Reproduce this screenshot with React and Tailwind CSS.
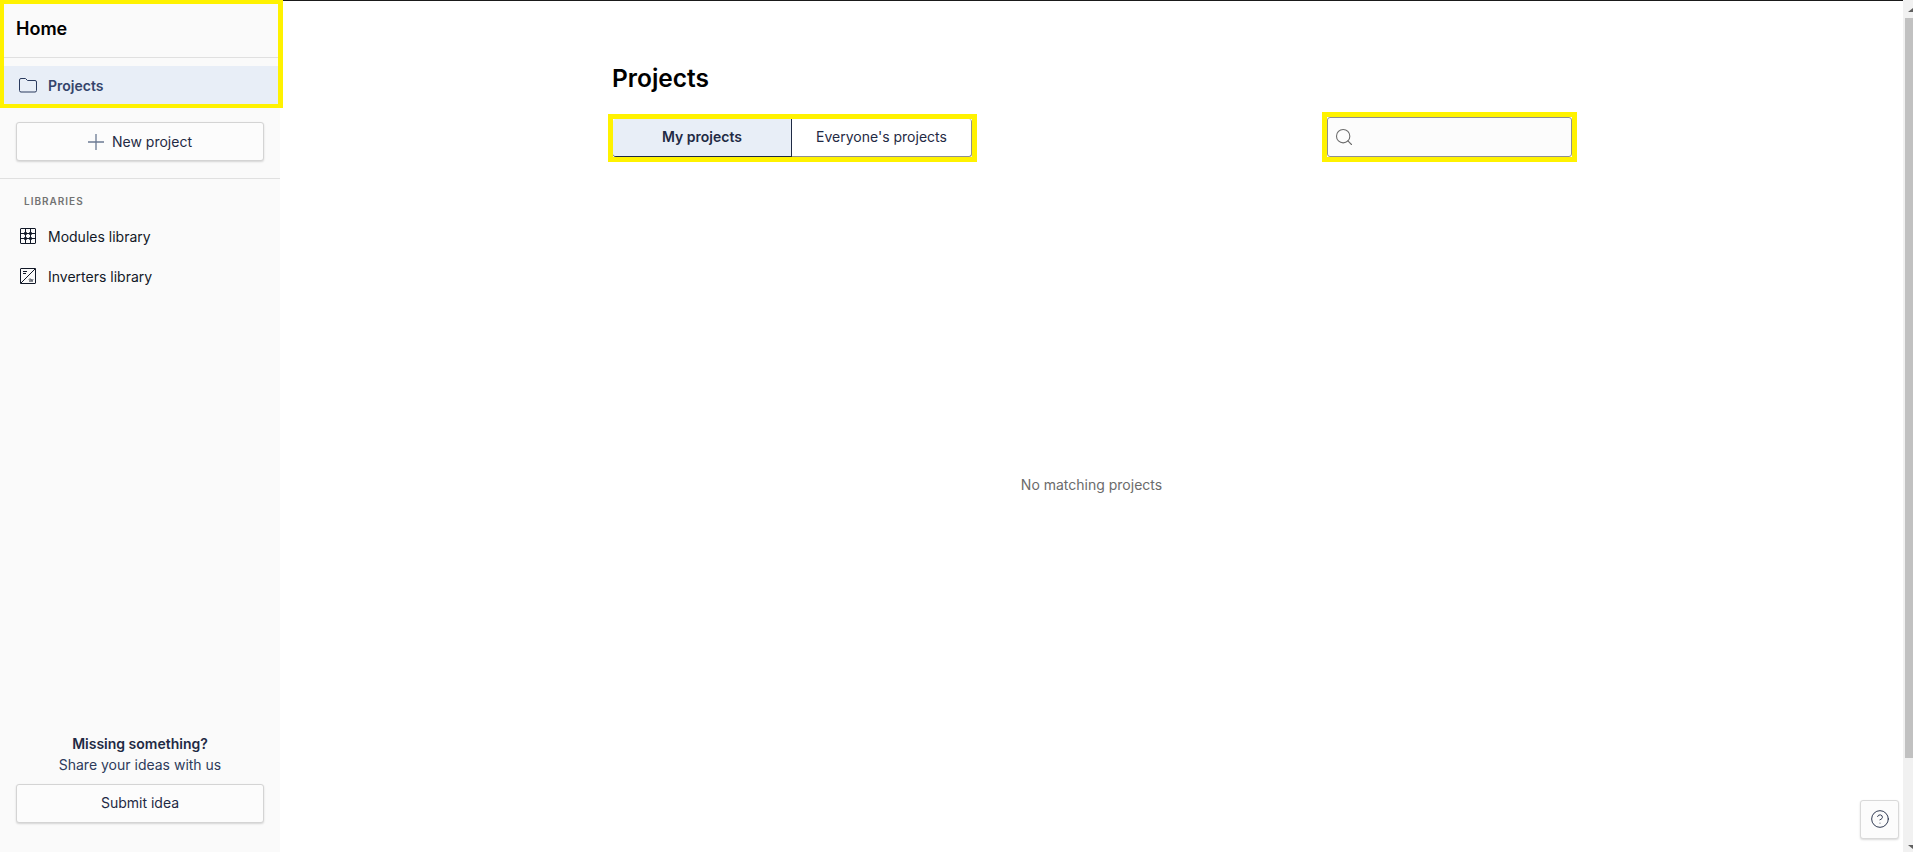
import React from 'react';
import { Search, CircleHelp } from 'lucide-react';

const FolderIcon = () => (
  <svg width="18" height="15" viewBox="0 0 18 15" fill="none" stroke="#2a3a5e" strokeWidth="1">
    <path d="M.5 12.5V2A1.5 1.5 0 0 1 2 .5h4.5l2 2H16A1.5 1.5 0 0 1 17.500 4v8.500A1.500 1.500 0 0 1 16 14H2a1.500 1.500 0 0 1-1.500-1.500z" />
  </svg>
);

const PlusIcon = () => (
  <svg width="16" height="16" viewBox="0 0 16 16" fill="none" stroke="#6b7a93" strokeWidth="1.3">
    <path d="M0 8h16M8 0v16" />
  </svg>
);

const ModulesIcon = () => (
  <svg width="16" height="16" viewBox="0 0 16 16" fill="none" stroke="#111827" strokeWidth="1">
    <rect x="0.5" y="0.5" width="15" height="15" rx="0.5" />
    <path d="M.5 5.500h15M.5 10.500h15M5.500 .5v15M10.500 .5v15" />
    <circle cx="5.500" cy="5.500" r="1.300" />
    <circle cx="10.500" cy="5.500" r="1.300" />
    <circle cx="5.500" cy="10.500" r="1.300" />
    <circle cx="10.500" cy="10.500" r="1.300" />
  </svg>
);

const InvertersIcon = () => (
  <svg width="16" height="16" viewBox="0 0 16 16" fill="none" stroke="#111827" strokeWidth="1">
    <rect x="0.5" y="0.5" width="15" height="15" rx="0.5" />
    <path d="M.5 15.500l15-15M3 3.500h4M3 5.500h3M9 11.500c.7-.9 1.400-.9 2 0s1.400.9 2 0M9 13h4" />
  </svg>
);

const App = () => {
  return (
    <div className="h-[852px] flex overflow-hidden bg-white font-['Inter',sans-serif] text-[#1f2a44]">

      {/* Sidebar */}
      <aside className="w-[280px] shrink-0 flex flex-col bg-[#fafafa]">
        <div className="border-4 border-r-[5px] border-[#fff200] w-[283px] h-[108px] relative z-10">
          <div className="h-[54px] flex items-center px-3 pb-[5px] border-b border-[#e0e0e0]">
            <h2 className="text-[18px] font-semibold text-black">Home</h2>
          </div>
          <div className="mt-2 h-[38px] flex items-center gap-[11px] pl-[15px] bg-[#e8eef7]">
            <FolderIcon />
            <span className="text-[14px] font-semibold text-[#34446b]">Projects</span>
          </div>
        </div>

        <div className="px-4 pt-[14px] pb-[17px] border-b border-[#e0e0e0]">
          <button className="w-full h-[39px] flex items-center justify-center gap-2 bg-[#fcfcfc] border border-[#d4d4d4] rounded-[3px] shadow-[0_1px_2px_rgba(0,0,0,0.15)] text-[14px] text-[#1f2a44]">
            <PlusIcon />
            New project
          </button>
        </div>

        <div className="px-6 pt-[15px] pb-[7px] text-[10px] font-semibold tracking-[0.1em] text-[#737373]">LIBRARIES</div>
        <div className="flex items-center gap-3 pl-5 h-10 text-[14px] text-[#111827]">
          <ModulesIcon />
          Modules library
        </div>
        <div className="flex items-center gap-3 pl-5 h-10 text-[14px] text-[#111827]">
          <InvertersIcon />
          Inverters library
        </div>

        <div className="mt-auto px-4 pb-[29px] flex flex-col">
          <p className="text-center text-[14px] font-semibold text-[#1f2a44] leading-5">Missing something?</p>
          <p className="text-center text-[14px] text-[#2e3b5b] leading-5 mt-px">Share your ideas with us</p>
          <button className="mt-[9px] w-full h-[39px] pb-[3px] bg-[#fcfcfc] border border-[#d4d4d4] rounded-[3px] shadow-[0_1px_2px_rgba(0,0,0,0.15)] text-[14px] text-[#1f2a44]">
            Submit idea
          </button>
        </div>
      </aside>

      {/* Main */}
      <main className="flex-1 min-w-0 flex flex-col relative border-t border-[#1a1a1a]">
        <div className="w-[965px] ml-[332px] pt-[62px]">
          <h1 className="text-[24.5px] leading-[30px] font-semibold text-black">Projects</h1>
          <div className="mt-[19px] flex items-end justify-between">
            <div className="border-[5px] border-[#fff200] flex -ml-[4px]">
              <div className="flex h-[38px] w-[359px] rounded-[3px] text-[14px]">
                <button className="w-[179px] pb-[3px] bg-[#e8eef7] font-semibold text-[#1f2a44] border-b border-r border-[#1f2a44] rounded-l-[3px]">My projects</button>
                <button className="flex-1 pb-[2px] bg-white text-[#1f2a44] border-b border-r border-[#8f8f8f] rounded-r-[3px]">Everyone's projects</button>
              </div>
            </div>
            <div className="border-[5px] border-[#fff200]">
              <div className="w-[245px] h-[40px] flex items-center pl-[6px] bg-[#fcfcfc] border border-[#8f8f8f] rounded-[3px]">
                <Search size={20} strokeWidth={1.3} color="#6b6b6b" />
              </div>
            </div>
          </div>
        </div>

        <div className="flex-1 flex items-center justify-center pb-[46px] text-[14px] text-[#6b6b6b]">
          No matching projects
        </div>

        <button className="absolute right-[4px] bottom-[13px] w-[39px] h-[39px] pb-[2px] flex items-center justify-center bg-[#fcfcfc] border border-[#d9d9d9] rounded-[3px] shadow-[0_1px_2px_rgba(0,0,0,0.15)]">
          <CircleHelp size={20} strokeWidth={1.1} color="#1f2a44" />
        </button>
      </main>

      {/* Browser scrollbar, cropped at the right edge */}
      <div className="w-[10px] shrink-0 flex flex-col overflow-hidden bg-[#f1f1f1]">
        <div className="h-[18px] pt-2 pl-[5px]">
          <div className="w-0 h-0 border-x-[5px] border-x-transparent border-b-[4px] border-b-[#606060]" />
        </div>
        <div className="h-[740px] ml-[2px] bg-[#c1c1c1]" />
        <div className="mt-auto pb-[3px] pl-[5px]">
          <div className="w-0 h-0 border-x-[5px] border-x-transparent border-t-[4px] border-t-[#606060]" />
        </div>
      </div>
    </div>
  );
};

export default App;
